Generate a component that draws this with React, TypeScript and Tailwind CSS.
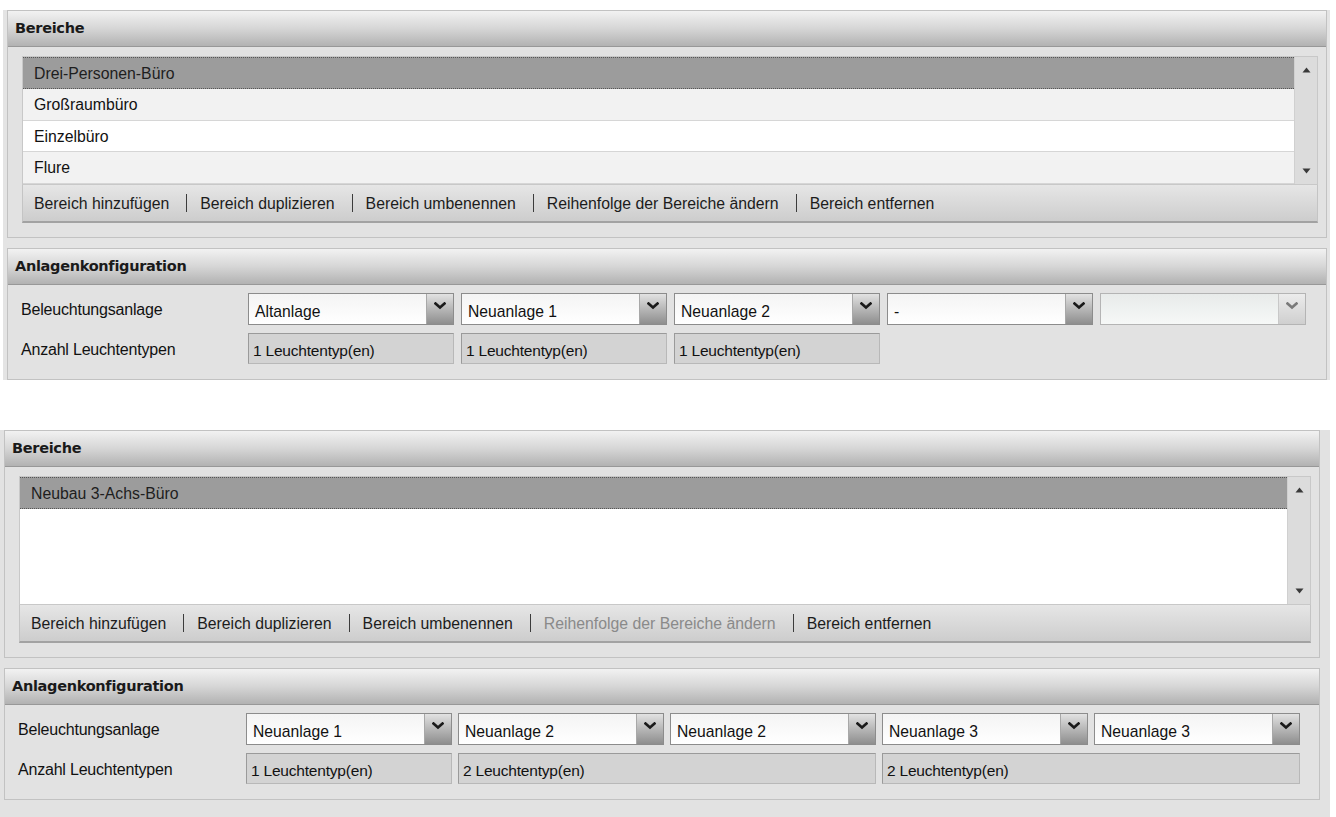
import React from 'react'

const sans = "font-['Liberation_Sans',Arial,sans-serif]"

const Chevron = ({ disabled }: { disabled?: boolean }) => (
  <svg width="12" height="8" viewBox="0 0 12 8">
    <path
      d="M1.5 1.5 L6 5.5 L10.5 1.5"
      fill="none"
      stroke={disabled ? '#7a7a7a' : '#1a1a1a'}
      strokeWidth="2.6"
      strokeLinecap="square"
    />
  </svg>
)

const Select = ({ value, disabled }: { value?: string; disabled?: boolean }) => (
  <div
    className={`flex h-[32px] border ${
      disabled ? 'border-[#b4b4b4] bg-gradient-to-b from-[#e8ebea] to-[#f6f8f7]' : 'border-[#8c8c8c] bg-gradient-to-b from-[#f4f4f4] to-white'
    }`}
  >
    <div className={`flex flex-1 items-center pl-[6px] pt-[5px] text-[15.7px] text-[#111] ${sans}`}>{value}</div>
    <div
      className={`flex w-[27px] items-start justify-center border-l pt-[8px] ${
        disabled ? 'border-[#c8c8c8] bg-gradient-to-b from-[#ececec] to-[#cfcfcf]' : 'border-[#a8a8a8] bg-gradient-to-b from-[#e2e2e2] to-[#8e8e8e]'
      }`}
    >
      <Chevron disabled={disabled} />
    </div>
  </div>
)

const ReadOnly = ({ value, className = '' }: { value: string; className?: string }) => (
  <div
    className={`flex h-[31px] items-center border border-[#9a9a9a] border-b-[#b8b8b8] border-r-[#b8b8b8] bg-[#d3d3d3] pl-[4px] pt-[5px] text-[15.5px] tracking-[-0.2px] text-[#111] ${sans} ${className}`}
  >
    {value}
  </div>
)

const Header = ({ title }: { title: string }) => (
  <div className="flex h-[36px] items-center border-b border-[#989898] bg-gradient-to-b from-[#f2f2f2] via-[#d6d6d6] to-[#b2b2b2] pl-[7px]">
    <span className="font-['DejaVu_Sans',Verdana,sans-serif] text-[14.5px] font-bold tracking-[-0.3px] text-[#1a1a1a]">{title}</span>
  </div>
)

const Panel = ({ title, children, className = '' }: { title: string; children: React.ReactNode; className?: string }) => (
  <div className={`flex flex-col border border-[#c2c2c2] bg-[#e2e2e2] ${className}`}>
    <Header title={title} />
    {children}
  </div>
)

const toolbarItems = [
  'Bereich hinzufügen',
  'Bereich duplizieren',
  'Bereich umbenennen',
  'Reihenfolge der Bereiche ändern',
  'Bereich entfernen',
]

const Toolbar = ({ disabledIndex }: { disabledIndex?: number }) => (
  <div className="flex h-[38px] items-center border border-t-0 border-[#c4c4c4] border-b-2 border-b-[#a2a2a2] bg-gradient-to-b from-[#e6e6e6] to-[#cdcdcd] pl-[11px]">
    {toolbarItems.map((t, i) => (
      <React.Fragment key={t}>
        {i > 0 && <div className="ml-[17px] mr-[13px] h-[18px] w-px bg-[#3c3c3c]" />}
        <span className={`pt-[1px] text-[15.8px] ${sans} ${i === disabledIndex ? 'text-[#8a8a8a]' : 'text-[#1c1c1c]'}`}>{t}</span>
      </React.Fragment>
    ))}
  </div>
)

const Scrollbar = () => (
  <div className="flex w-[23px] flex-col items-center justify-between border-l border-[#d0d0d0] bg-[#dcdcdc] py-[10px]">
    <svg width="9" height="6" viewBox="0 0 9 6">
      <path d="M0.5 5.5 L4.5 0.5 L8.5 5.5 Z" fill="#3a3a3a" />
    </svg>
    <svg width="9" height="6" viewBox="0 0 9 6">
      <path d="M0.5 0.5 L4.5 5.5 L8.5 0.5 Z" fill="#3a3a3a" />
    </svg>
  </div>
)

const Row = ({ label, selected, shaded }: { label: string; selected?: boolean; shaded?: boolean }) => (
  <div
    className={`flex h-[32px] items-center pl-[11px] pt-[1px] text-[15.8px] ${sans} ${
      selected
        ? 'border-y border-dotted border-[#555] bg-[#9c9c9c] text-[#1e1e1e]'
        : `border-b border-[#d6d6d6] text-[#111] ${shaded ? 'bg-[#f2f2f2]' : 'bg-white'}`
    }`}
  >
    {label}
  </div>
)

const BereicheList = ({ rows }: { rows: string[] }) => (
  <div className="flex h-[129px] border border-[#c8c8c8] bg-white">
    <div className="flex flex-1 flex-col">
      {rows.map((r, i) => (
        <Row key={r} label={r} selected={i === 0} shaded={i % 2 === 1} />
      ))}
    </div>
    <Scrollbar />
  </div>
)

const Bereiche = ({ rows, disabledIndex, className = '' }: { rows: string[]; disabledIndex?: number; className?: string }) => (
  <Panel title="Bereiche" className={`h-[228px] ${className}`}>
    <div className="flex flex-col pl-[14px] pr-[8px] pt-[9px]">
      <BereicheList rows={rows} />
      <Toolbar disabledIndex={disabledIndex} />
    </div>
  </Panel>
)

const Label = ({ children }: { children: React.ReactNode }) => (
  <div className={`flex items-center pt-[2px] text-[16px] tracking-[-0.2px] text-[#111] ${sans}`}>{children}</div>
)

export default function App() {
  return (
    <div className="h-[817px] w-full overflow-hidden bg-white">
      {/* first screenshot */}
      <div className="ml-[3px] mr-[6px] mt-[10px] flex flex-col gap-[10px] bg-[#e4e4e4] pl-[4px] pr-[3px]">
        <Bereiche rows={['Drei-Personen-Büro', 'Großraumbüro', 'Einzelbüro', 'Flure']} />
        <Panel title="Anlagenkonfiguration" className="h-[132px]">
          <div className="grid grid-cols-[220px_repeat(5,206px)] gap-x-[7px] gap-y-[8px] pl-[13px] pt-[8px]">
            <Label>Beleuchtungsanlage</Label>
            <Select value="Altanlage" />
            <Select value="Neuanlage 1" />
            <Select value="Neuanlage 2" />
            <Select value="-" />
            <Select disabled />
            <Label>Anzahl Leuchtentypen</Label>
            <ReadOnly value="1 Leuchtentyp(en)" />
            <ReadOnly value="1 Leuchtentyp(en)" />
            <ReadOnly value="1 Leuchtentyp(en)" />
          </div>
        </Panel>
      </div>

      {/* second screenshot */}
      <div className="mr-[6px] mt-[50px] flex h-[387px] flex-col gap-[10px] bg-[#e2e2e2] pl-[4px] pr-[10px]">
        <Bereiche rows={['Neubau 3-Achs-Büro']} disabledIndex={3} />
        <Panel title="Anlagenkonfiguration" className="h-[132px]">
          <div className="grid grid-cols-[222px_repeat(5,206px)] gap-x-[6px] gap-y-[8px] pl-[13px] pt-[8px]">
            <Label>Beleuchtungsanlage</Label>
            <Select value="Neuanlage 1" />
            <Select value="Neuanlage 2" />
            <Select value="Neuanlage 2" />
            <Select value="Neuanlage 3" />
            <Select value="Neuanlage 3" />
            <Label>Anzahl Leuchtentypen</Label>
            <ReadOnly value="1 Leuchtentyp(en)" />
            <ReadOnly value="2 Leuchtentyp(en)" className="col-span-2" />
            <ReadOnly value="2 Leuchtentyp(en)" className="col-span-2" />
          </div>
        </Panel>
      </div>
    </div>
  )
}
